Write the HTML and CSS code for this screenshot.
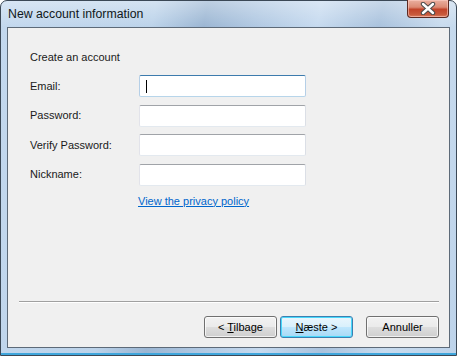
FILE: index.html
```html
<!DOCTYPE html>
<html>
<head>
<meta charset="utf-8">
<link rel="stylesheet" href="styles.css">
</head>
<body>
<div class="window">
  <div class="titlebar">
    <span class="title">New account information</span>
    <button class="close" aria-label="Close">
      <svg width="18" height="13" viewBox="0 0 18 13">
        <path d="M4 2 L14 11 M14 2 L4 11" stroke="#4a4a4a" stroke-width="4.4" stroke-linecap="round"/>
        <path d="M4 2 L14 11 M14 2 L4 11" stroke="#ffffff" stroke-width="2.4" stroke-linecap="round"/>
      </svg>
    </button>
  </div>
  <div class="client">
    <div class="content">
      <div class="heading">Create an account</div>
      <div class="form">
        <label class="lbl">Email:</label>
        <div class="input focused"><span class="caret"></span></div>
        <label class="lbl">Password:</label>
        <div class="input"></div>
        <label class="lbl">Verify Password:</label>
        <div class="input"></div>
        <label class="lbl">Nickname:</label>
        <div class="input"></div>
        <span></span>
        <a class="link" href="#">View the privacy policy</a>
      </div>
    </div>
    <div class="footer">
      <div class="sep"></div>
      <div class="buttons">
        <button class="btn">&lt; <u>T</u>ilbage</button>
        <button class="btn default"><u>N</u>æste &gt;</button>
        <button class="btn cancel">Annuller</button>
      </div>
    </div>
  </div>
</div>
</body>
</html>
```

FILE: styles.css
```css
html, body {
  margin: 0;
  padding: 0;
  width: 457px;
  height: 356px;
  overflow: hidden;
  background: #ffffff;
}

.window {
  box-sizing: border-box;
  width: 457px;
  height: 356px;
  border: 1px solid #3b4856;
  border-radius: 7px 7px 0 0;
  background:
    linear-gradient(180deg, rgba(255,255,255,0.35) 0px, rgba(255,255,255,0) 26px),
    linear-gradient(100deg, #c3d8ee 0%, #bcd3ea 30%, #9bb6d3 40%, #b0c8e2 50%, #c6daef 62%, #a9c2dd 74%, #c8dbee 86%, #bdd3ea 100%);
  display: flex;
  flex-direction: column;
  font-family: "Liberation Sans", Arial, sans-serif;
  font-size: 11px;
  color: #1a1a1a;
  box-shadow: inset 0 -2px 0 #3fa6dc;
}

.titlebar {
  height: 26px;
  display: flex;
  justify-content: space-between;
  align-items: flex-start;
}

.title {
  padding-left: 7px;
  padding-top: 6px;
  font-size: 12.3px;
  color: #101820;
}

.close {
  box-sizing: border-box;
  width: 42px;
  height: 18px;
  margin: -1px 7px 0 0;
  padding: 0;
  border: 1px solid #5c2a22;
  border-top: none;
  border-radius: 0 0 4px 4px;
  background: linear-gradient(180deg, #eab0a0 0%, #dc8a74 42%, #c2442a 55%, #c85a3c 85%, #dc7e60 100%);
  box-shadow: inset 0 0 0 1px rgba(255,210,200,0.55);
  display: flex;
  align-items: center;
  justify-content: center;
}

.client {
  box-sizing: border-box;
  margin: 0 6px 0 6px;
  height: 321px;
  border: 1px solid #5d6a78;
  background: #f0f0f0;
  display: flex;
  flex-direction: column;
  justify-content: space-between;
}

.content {
  padding: 22px 0 0 22px;
}

.heading {
  height: 15px;
  line-height: 15px;
}

.form {
  margin-top: 10px;
  display: grid;
  grid-template-columns: 109px 167px;
  grid-auto-rows: 22px;
  row-gap: 7.5px;
  align-items: center;
}

.form .link {
  margin-top: -6px;
  margin-left: -1px;
}

.lbl {
  line-height: 15px;
}

.input {
  box-sizing: border-box;
  height: 22px;
  background: #ffffff;
  border: 1px solid #abadb3;
  border-top-color: #a0a3a8;
  border-left-color: #e2e3ea;
  border-right-color: #dbdfe6;
  border-bottom-color: #e3e9ef;
  border-radius: 2px;
  position: relative;
}

.input.focused {
  border: 1px solid #5a97c9;
  border-top-color: #3d7bad;
  border-left-color: #b5cfe7;
  border-right-color: #b5cfe7;
  border-bottom-color: #b7d5ea;
}

.caret {
  position: absolute;
  left: 6px;
  top: 4px;
  width: 1px;
  height: 13px;
  background: #000000;
}

.link {
  color: #0066cc;
  text-decoration: underline;
  line-height: 15px;
}

.footer {
  padding: 0 10px 9px 11px;
}

.sep {
  height: 1px;
  background: #a0a0a0;
  border-bottom: 1px solid #ffffff;
}

.buttons {
  margin-top: 13px;
  display: flex;
  justify-content: flex-end;
  gap: 3px;
}

.btn {
  box-sizing: border-box;
  width: 73px;
  height: 22px;
  padding: 0;
  font-family: "Liberation Sans", Arial, sans-serif;
  font-size: 11px;
  color: #000000;
  border: 1px solid #707070;
  border-radius: 3px;
  background: linear-gradient(180deg, #f2f2f2 0%, #ebebeb 48%, #dddddd 52%, #cfcfcf 100%);
  box-shadow: inset 0 0 0 1px rgba(255,255,255,0.7);
}

.btn.default {
  border-color: #3c7fb1;
  background: linear-gradient(180deg, #eaf6fd 0%, #d9f0fc 48%, #bee6fd 52%, #a7d9f5 100%);
  box-shadow: inset 0 0 0 1px #48d8fb;
}

.btn.cancel {
  margin-left: 10px;
}
```
